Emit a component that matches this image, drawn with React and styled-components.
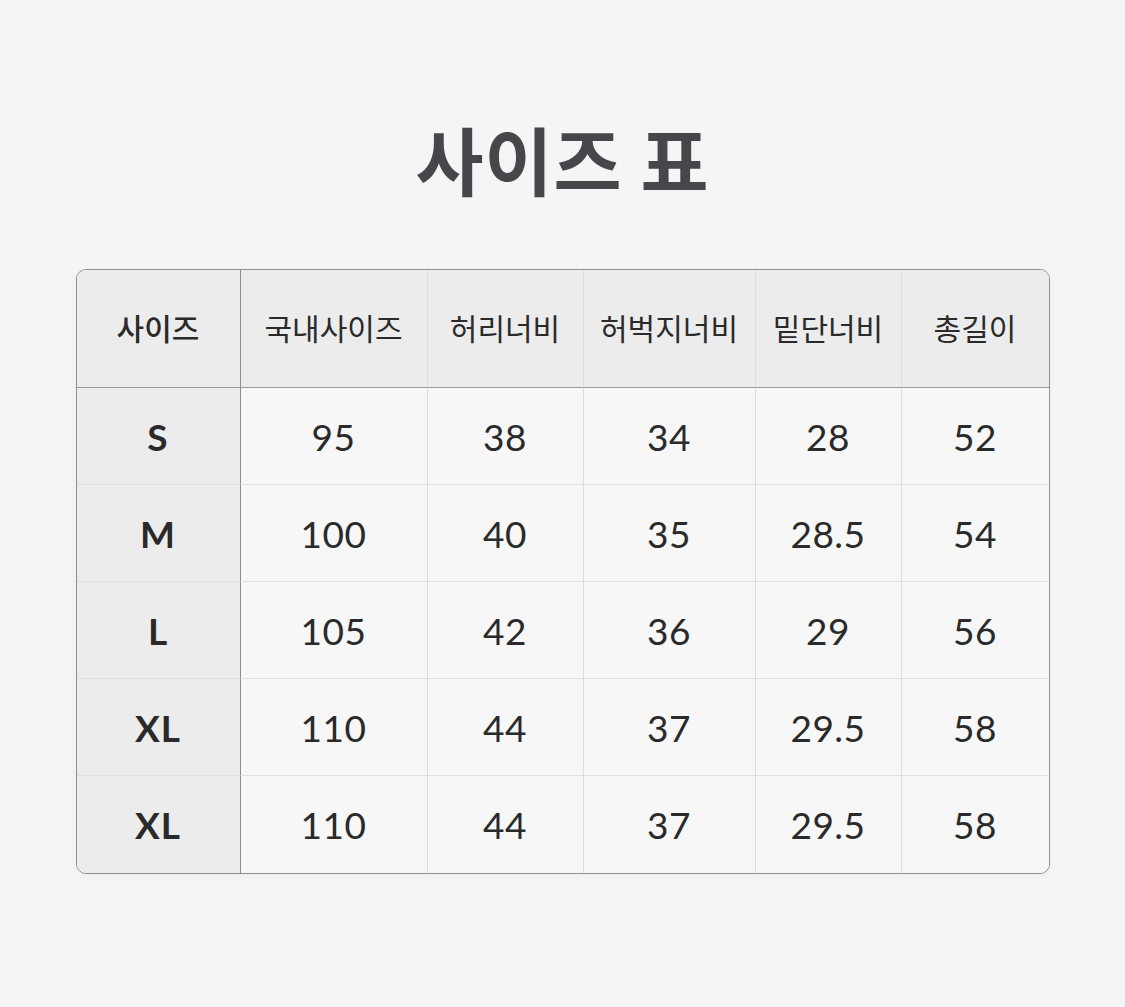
import React from "react";
import styled, { createGlobalStyle } from "styled-components";

const GlobalStyle = createGlobalStyle`
  html, body {
    margin: 0;
    padding: 0;
    background-color: #f5f5f5;
  }
  body {
    font-family: "Noto Sans CJK KR", "Noto Sans", sans-serif;
  }
`;

const Page = styled.main`
  width: 1125px;
  min-height: 1007px;
  padding-top: 106px;
  box-sizing: border-box;
  display: flex;
  flex-direction: column;
  align-items: center;
`;

const Title = styled.h1`
  margin: 0;
  height: 104px;
  line-height: 104px;
  font-family: "Noto Sans CJK KR", sans-serif;
  font-size: 74px;
  font-weight: 700;
  color: #46474a;
  letter-spacing: 1px;
`;

const TableBox = styled.div`
  margin-top: 59px;
  width: 974px;
  box-sizing: border-box;
  border: 1px solid #8f8f8f;
  border-radius: 10px;
  overflow: hidden;
  box-shadow: 0 2px 6px rgba(0, 0, 0, 0.04);
  display: grid;
  grid-template-columns: 164px 187px 156px 172px 146px 1fr;
  grid-template-rows: 118px repeat(5, 97px);
  background-color: #f7f7f7;
`;

const Cell = styled.div`
  display: flex;
  align-items: center;
  justify-content: center;
  box-sizing: border-box;
  color: #2b2b2b;
  background-color: ${(p) => (p.$head || p.$side ? "#ececec" : "#f7f7f7")};
  border-right: ${(p) =>
    p.$last ? "none" : p.$side || (p.$head && p.$first) ? "1px solid #8d8d8d" : "1px solid #dedede"};
  border-bottom: ${(p) =>
    p.$bottom ? "none" : p.$head ? "1px solid #9a9a9a" : "1px solid #e0e0e0"};
`;

const HeadText = styled.span`
  font-family: "Noto Sans CJK KR", sans-serif;
  font-size: 30px;
  font-weight: ${(p) => (p.$strong ? 500 : 400)};
  color: #2a2a2a;
  padding-bottom: 4px;
`;

const SizeText = styled.span`
  font-family: "Lato", "Liberation Sans", sans-serif;
  font-size: 37px;
  font-weight: 700;
  color: #2a2a2a;
  letter-spacing: 1px;
`;

const NumText = styled.span`
  font-family: "Lato", "Liberation Sans", sans-serif;
  font-size: 37px;
  font-weight: 400;
  color: #2a2a2a;
  letter-spacing: 0.5px;
`;

const headers = ["사이즈", "국내사이즈", "허리너비", "허벅지너비", "밑단너비", "총길이"];

const rows = [
  ["S", "95", "38", "34", "28", "52"],
  ["M", "100", "40", "35", "28.5", "54"],
  ["L", "105", "42", "36", "29", "56"],
  ["XL", "110", "44", "37", "29.5", "58"],
  ["XL", "110", "44", "37", "29.5", "58"],
];

export default function App() {
  return (
    <>
      <GlobalStyle />
      <Page>
        <Title>사이즈 표</Title>
        <TableBox>
          {headers.map((h, i) => (
            <Cell key={h} $head $first={i === 0} $last={i === headers.length - 1}>
              <HeadText $strong={i === 0}>{h}</HeadText>
            </Cell>
          ))}
          {rows.map((row, r) =>
            row.map((v, c) => (
              <Cell
                key={`${r}-${c}`}
                $side={c === 0}
                $last={c === row.length - 1}
                $bottom={r === rows.length - 1}
              >
                {c === 0 ? <SizeText>{v}</SizeText> : <NumText>{v}</NumText>}
              </Cell>
            ))
          )}
        </TableBox>
      </Page>
    </>
  );
}
